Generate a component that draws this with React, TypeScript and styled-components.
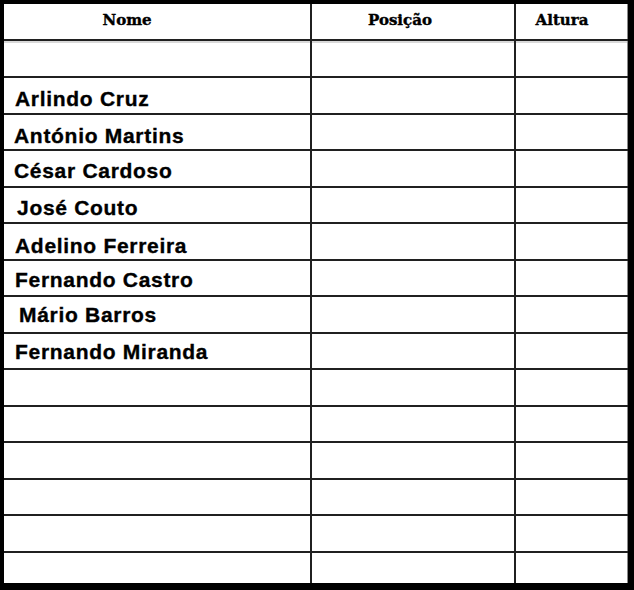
import React from 'react';
import styled, { createGlobalStyle } from 'styled-components';

const GlobalStyle = createGlobalStyle`
  html, body {
    margin: 0;
    padding: 0;
    background: #fff;
  }
`;

const Sheet = styled.div`
  box-sizing: border-box;
  width: 634px;
  height: 590px;
  background: #fff;
  border-style: solid;
  border-color: #000;
  border-width: 4px 6px 7px 4px;
  display: flex;
  flex-direction: column;
`;

const Row = styled.div<{ $h: number; $last?: boolean }>`
  box-sizing: border-box;
  display: grid;
  grid-template-columns: 308px 204px 112px;
  height: ${(p) => p.$h}px;
  border-bottom: ${(p) => (p.$last ? 'none' : '2px solid #202020')};
`;

const HeaderRow = styled(Row)`
  box-shadow: 0 2px 0 #d9d9d9;
`;

const Cell = styled.div`
  box-sizing: border-box;
  border-right: 2px solid #202020;

  &:last-child {
    border-right: 1px solid #8a8a8a;
  }
`;

const HeadCell = styled(Cell)<{ $shift: number }>`
  padding: 9px ${(p) => p.$shift}px 0 0;
  text-align: center;
  font-family: 'DejaVu Serif', 'Liberation Serif', serif;
  font-weight: bold;
  font-size: 15px;
  line-height: 14px;
  color: #000;
  -webkit-text-stroke: 0.4px #000;
`;

const NameCell = styled(Cell)<{ $top: number; $left: number }>`
  padding: ${(p) => p.$top}px 0 0 ${(p) => p.$left}px;
  font-family: 'Liberation Sans', Arial, sans-serif;
  font-weight: bold;
  font-size: 21px;
  line-height: 21px;
  letter-spacing: 0.7px;
  color: #000;
  white-space: nowrap;
  -webkit-text-stroke: 0.35px #000;
`;

type Person = { name: string; top: number; left: number };

const people: (Person | null)[] = [
  null,
  { name: 'Arlindo Cruz', top: 10, left: 11 },
  { name: 'António Martins', top: 10, left: 10 },
  { name: 'César Cardoso', top: 9, left: 10 },
  { name: 'José Couto', top: 9, left: 13 },
  { name: 'Adelino Ferreira', top: 11, left: 11 },
  { name: 'Fernando Castro', top: 8, left: 11 },
  { name: 'Mário Barros', top: 7, left: 15 },
  { name: 'Fernando Miranda', top: 7, left: 11 },
  null,
  null,
  null,
  null,
  null,
  null,
];

// row heights in px (border included), read off the scan
const heights = [37, 37, 36, 37, 36, 37, 36, 37, 36, 37, 36, 37, 36, 37, 30];

export default function App() {
  return (
    <>
      <GlobalStyle />
      <Sheet>
        <HeaderRow $h={37}>
          <HeadCell $shift={60}>Nome</HeadCell>
          <HeadCell $shift={26}>Posição</HeadCell>
          <HeadCell $shift={19}>Altura</HeadCell>
        </HeaderRow>
        {people.map((p, i) => (
          <Row key={i} $h={heights[i]} $last={i === people.length - 1}>
            <NameCell $top={p ? p.top : 0} $left={p ? p.left : 0}>
              {p ? p.name : ''}
            </NameCell>
            <Cell />
            <Cell />
          </Row>
        ))}
      </Sheet>
    </>
  );
}
